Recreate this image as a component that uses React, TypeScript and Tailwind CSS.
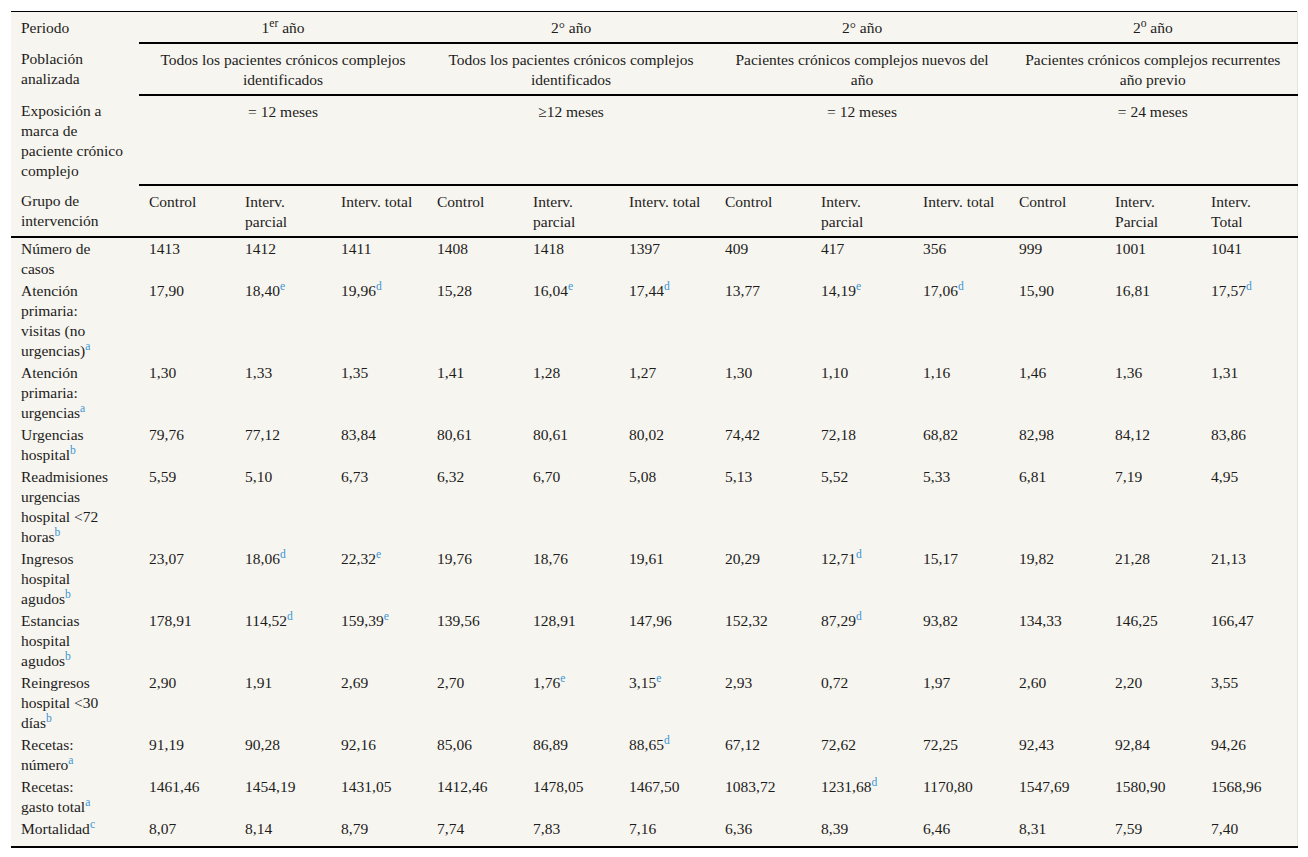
import React from 'react'

type Row = { label: string[]; sup: string; values: string[] }

const colWidths = [
    'w-[128px]', 'w-[96px]', 'w-[96px]', 'w-[96px]', 'w-[96px]', 'w-[96px]', 'w-[96px]',
    'w-[96px]', 'w-[102px]', 'w-[96px]', 'w-[96px]', 'w-[96px]', 'w-[96px]',
]

const rows: Row[] = [
    { label: ['Número de', 'casos'], sup: '', values: ['1413', '1412', '1411', '1408', '1418', '1397', '409', '417', '356', '999', '1001', '1041'] },
    { label: ['Atención', 'primaria:', 'visitas (no', 'urgencias)'], sup: 'a', values: ['17,90', '18,40^e', '19,96^d', '15,28', '16,04^e', '17,44^d', '13,77', '14,19^e', '17,06^d', '15,90', '16,81', '17,57^d'] },
    { label: ['Atención', 'primaria:', 'urgencias'], sup: 'a', values: ['1,30', '1,33', '1,35', '1,41', '1,28', '1,27', '1,30', '1,10', '1,16', '1,46', '1,36', '1,31'] },
    { label: ['Urgencias', 'hospital'], sup: 'b', values: ['79,76', '77,12', '83,84', '80,61', '80,61', '80,02', '74,42', '72,18', '68,82', '82,98', '84,12', '83,86'] },
    { label: ['Readmisiones', 'urgencias', 'hospital <72', 'horas'], sup: 'b', values: ['5,59', '5,10', '6,73', '6,32', '6,70', '5,08', '5,13', '5,52', '5,33', '6,81', '7,19', '4,95'] },
    { label: ['Ingresos', 'hospital', 'agudos'], sup: 'b', values: ['23,07', '18,06^d', '22,32^e', '19,76', '18,76', '19,61', '20,29', '12,71^d', '15,17', '19,82', '21,28', '21,13'] },
    { label: ['Estancias', 'hospital', 'agudos'], sup: 'b', values: ['178,91', '114,52^d', '159,39^e', '139,56', '128,91', '147,96', '152,32', '87,29^d', '93,82', '134,33', '146,25', '166,47'] },
    { label: ['Reingresos', 'hospital <30', 'días'], sup: 'b', values: ['2,90', '1,91', '2,69', '2,70', '1,76^e', '3,15^e', '2,93', '0,72', '1,97', '2,60', '2,20', '3,55'] },
    { label: ['Recetas:', 'número'], sup: 'a', values: ['91,19', '90,28', '92,16', '85,06', '86,89', '88,65^d', '67,12', '72,62', '72,25', '92,43', '92,84', '94,26'] },
    { label: ['Recetas:', 'gasto total'], sup: 'a', values: ['1461,46', '1454,19', '1431,05', '1412,46', '1478,05', '1467,50', '1083,72', '1231,68^d', '1170,80', '1547,69', '1580,90', '1568,96'] },
    { label: ['Mortalidad'], sup: 'c', values: ['8,07', '8,14', '8,79', '7,74', '7,83', '7,16', '6,36', '8,39', '6,46', '8,31', '7,59', '7,40'] },
]

const Note = ({ k }: { k: string }) => <sup className="text-[#3a97d4]">{k}</sup>

const Value = ({ v }: { v: string }) => {
    const [num, k] = v.split('^')
    return (
        <>
            {num}
            {k && <Note k={k} />}
        </>
    )
}

const Lines = ({ lines }: { lines: string[] }) => (
    <>
        {lines.map((l, i) => (
            <React.Fragment key={i}>
                {i > 0 && <br />}
                {l}
            </React.Fragment>
        ))}
    </>
)

const head = 'pt-[6px] pb-[4px] pl-[10px] pr-[4px] align-top font-normal'
const span = 'pt-[6px] pb-[4px] px-[8px] align-top font-normal text-center border-b-2 border-black'

const subHeads = [
    ['Control'], ['Interv.', 'parcial'], ['Interv. total'],
    ['Control'], ['Interv.', 'parcial'], ['Interv. total'],
    ['Control'], ['Interv.', 'parcial'], ['Interv. total'],
    ['Control'], ['Interv.', 'Parcial'], ['Interv.', 'Total'],
]

const App = () => {
    return (
        <div className="min-h-screen bg-white p-[11px]">
            <table
                className="table-fixed border-collapse w-[1286px] bg-[#f7f5ef] text-[#1c1c1c] text-[15.5px] leading-[20px] text-left border-t border-black border-b-2 border-r border-r-[#e6e3dc]"
                style={{ fontFamily: '"Liberation Serif", "Times New Roman", serif' }}
            >
                <colgroup>
                    {colWidths.map((w, i) => (
                        <col key={i} className={w} />
                    ))}
                </colgroup>
                <thead>
                    <tr>
                        <th className={head}>Periodo</th>
                        <th colSpan={3} className={span}>
                            1<sup>er</sup> año
                        </th>
                        <th colSpan={3} className={span}>2° año</th>
                        <th colSpan={3} className={span}>2° año</th>
                        <th colSpan={3} className={span}>
                            2<sup>o</sup> año
                        </th>
                    </tr>
                    <tr>
                        <th className={head}>
                            <Lines lines={['Población', 'analizada']} />
                        </th>
                        <th colSpan={3} className={span}>
                            <Lines lines={['Todos los pacientes crónicos complejos', 'identificados']} />
                        </th>
                        <th colSpan={3} className={span}>
                            <Lines lines={['Todos los pacientes crónicos complejos', 'identificados']} />
                        </th>
                        <th colSpan={3} className={span}>
                            <Lines lines={['Pacientes crónicos complejos nuevos del', 'año']} />
                        </th>
                        <th colSpan={3} className={span}>
                            <Lines lines={['Pacientes crónicos complejos recurrentes', 'año previo']} />
                        </th>
                    </tr>
                    <tr>
                        <th className={head}>
                            <Lines lines={['Exposición a', 'marca de', 'paciente crónico', 'complejo']} />
                        </th>
                        <th colSpan={3} className={span}>= 12 meses</th>
                        <th colSpan={3} className={span}>≥12 meses</th>
                        <th colSpan={3} className={span}>= 12 meses</th>
                        <th colSpan={3} className={span}>= 24 meses</th>
                    </tr>
                    <tr className="border-b-2 border-black">
                        <th className={head}>
                            <Lines lines={['Grupo de', 'intervención']} />
                        </th>
                        {subHeads.map((h, i) => (
                            <th key={i} className={head}>
                                <Lines lines={h} />
                            </th>
                        ))}
                    </tr>
                </thead>
                <tbody>
                    {rows.map((r, ri) => {
                        const last = ri === rows.length - 1
                        const cell = last
                            ? 'pt-[1px] pb-[7px] pl-[10px] pr-[4px] align-top'
                            : 'py-[1px] pl-[10px] pr-[4px] align-top'
                        return (
                            <tr key={ri}>
                                <td className={cell}>
                                    <Lines lines={r.label} />
                                    {r.sup && <Note k={r.sup} />}
                                </td>
                                {r.values.map((v, vi) => (
                                    <td key={vi} className={cell}>
                                        <Value v={v} />
                                    </td>
                                ))}
                            </tr>
                        )
                    })}
                </tbody>
            </table>
        </div>
    )
}

export default App
